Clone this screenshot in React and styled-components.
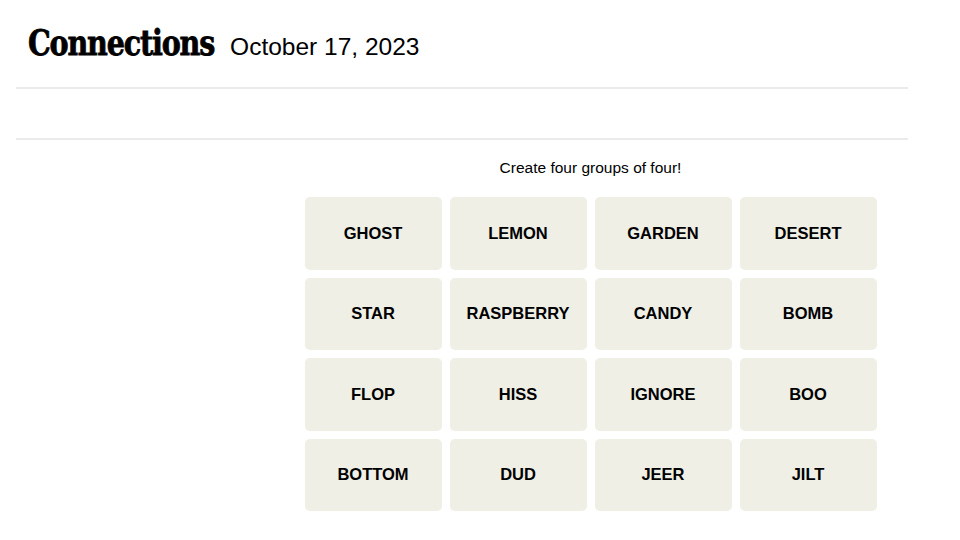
import styled, { createGlobalStyle } from "styled-components";

const words = [
  "GHOST", "LEMON", "GARDEN", "DESERT",
  "STAR", "RASPBERRY", "CANDY", "BOMB",
  "FLOP", "HISS", "IGNORE", "BOO",
  "BOTTOM", "DUD", "JEER", "JILT",
];

export default function App() {
  return (
    <Page>
      <GlobalStyle />
      <Header>
        <Title>Connections</Title>
        <DateText>October 17, 2023</DateText>
      </Header>
      <Toolbar />
      <Main>
        <Aside />
        <Board>
          <Prompt>Create four groups of four!</Prompt>
          <Grid>
            {words.map((word) => (
              <Tile key={word}>{word}</Tile>
            ))}
          </Grid>
        </Board>
      </Main>
    </Page>
  );
}

const GlobalStyle = createGlobalStyle`
  body {
    margin: 0;
    background: #fff;
    color: #000;
    font-family: "Liberation Sans", Arial, sans-serif;
  }
`;

const Page = styled.div`
  width: 892px;
  margin: 0 16px;
`;

const Header = styled.header`
  display: flex;
  align-items: baseline;
  gap: 16px;
  height: 89px;
  padding: 20px 12px 0;
  box-sizing: border-box;
  border-bottom: 2px solid #ebebeb;
`;

/* condensed slab wordmark: DejaVu Serif squeezed to the logo's width */
const Title = styled.h1`
  display: inline-block;
  margin: 0 -48px 0 0;
  font-family: "DejaVu Serif", serif;
  font-weight: 700;
  font-size: 36px;
  line-height: 44px;
  letter-spacing: -1.5px;
  -webkit-text-stroke: 0.8px #000;
  transform: scaleX(0.795);
  transform-origin: left center;
  white-space: nowrap;
`;

const DateText = styled.span`
  font-size: 24.5px;
  font-weight: 400;
  line-height: 44px;
`;

const Toolbar = styled.div`
  height: 49px;
  border-bottom: 2px solid #ebebeb;
`;

const Main = styled.main`
  display: grid;
  grid-template-columns: 289px 571px;
`;

const Aside = styled.div``;

const Board = styled.section`
  display: flex;
  flex-direction: column;
  align-items: center;
`;

const Prompt = styled.p`
  margin: 19px 0 0;
  font-size: 15.5px;
  line-height: 18px;
`;

const Grid = styled.div`
  display: grid;
  grid-template-columns: repeat(4, 137px);
  grid-auto-rows: 72.5px;
  gap: 8px;
  margin-top: 20px;
`;

const Tile = styled.button`
  display: flex;
  align-items: center;
  justify-content: center;
  border: none;
  border-radius: 5px;
  background: #efefe6;
  color: #000;
  font-family: "Liberation Sans", Arial, sans-serif;
  font-weight: 700;
  font-size: 16.5px;
  padding: 0;
`;
